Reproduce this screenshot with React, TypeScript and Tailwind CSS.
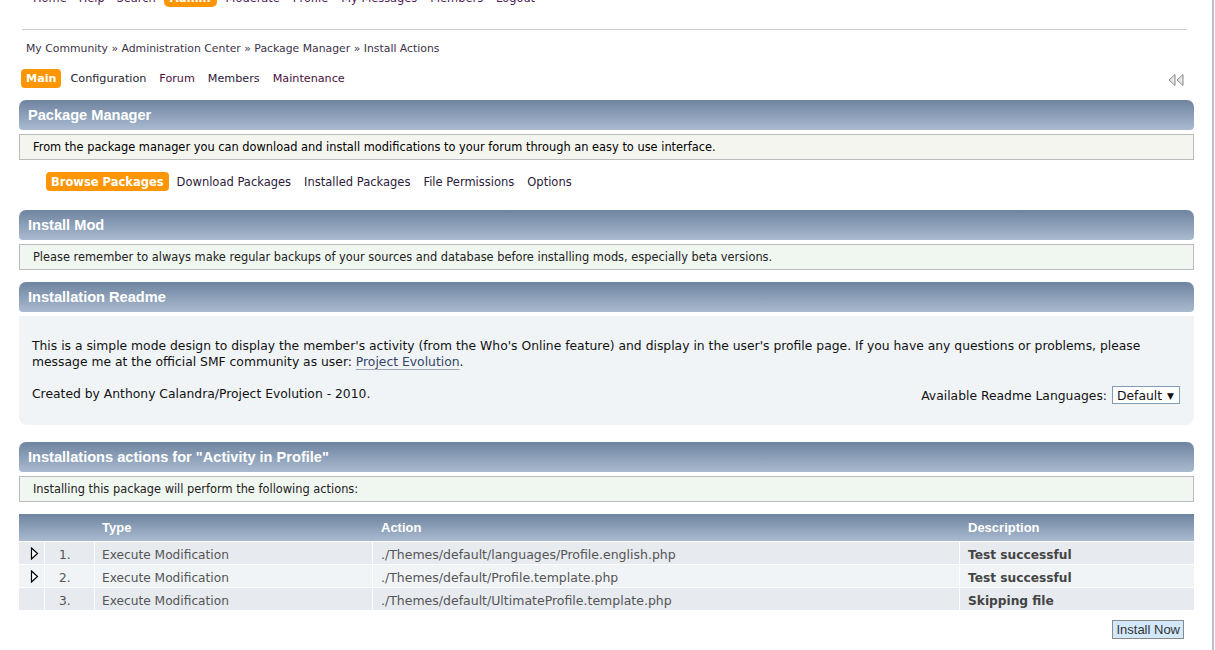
import React from "react";

const body = "[font-family:'DejaVu_Sans',Verdana,sans-serif]";
const head = "[font-family:'Liberation_Sans',Arial,sans-serif]";

function CatHeader({ title }: { title: string }) {
  return (
    <div
      className={`h-[30px] rounded-t-[7px] rounded-b-[4px] bg-gradient-to-b from-[#6f84a0] to-[#aabbd0] flex items-center px-[9px] pt-[1px] text-white font-bold text-[14.6px] ${head}`}
    >
      {title}
    </div>
  );
}

function Arrow() {
  return (
    <svg width="9" height="13" viewBox="0 0 9 13">
      <path d="M1.5 1 L7.5 6.5 L1.5 12 Z" fill="#fff" stroke="#000" strokeWidth="1.2" strokeLinejoin="miter" />
    </svg>
  );
}

function Collapse() {
  return (
    <svg width="16" height="12" viewBox="0 0 16 12">
      <path d="M7 0.5 L1 6 L7 11.5 Z" fill="#e6e6e6" stroke="#8a8a8a" strokeWidth="1" />
      <path d="M15 0.5 L9 6 L15 11.5 Z" fill="#e6e6e6" stroke="#8a8a8a" strokeWidth="1" />
    </svg>
  );
}

const rows = [
  { n: "1.", arrow: true, action: "./Themes/default/languages/Profile.english.php", desc: "Test successful", bg: "bg-[#e7eaef]" },
  { n: "2.", arrow: true, action: "./Themes/default/Profile.template.php", desc: "Test successful", bg: "bg-[#f0f4f7]" },
  { n: "3.", arrow: false, action: "./Themes/default/UltimateProfile.template.php", desc: "Skipping file", bg: "bg-[#e7eaef]" },
];

export default function App() {
  return (
    <div className={`w-[1215px] h-[650px] overflow-hidden bg-white flex ${body}`}>
      <div className="w-[1212px] flex flex-col">
        {/* top nav */}
        <div className="mt-[-12px] h-[19px] flex items-center text-[11.4px] text-[#4b1a55] ml-[33px]">
          <span className="pt-[2px]">Home</span>
          <span className="ml-[12px] pt-[2px]">Help</span>
          <span className="ml-[12px] pt-[2px]">Search</span>
          <span className="ml-[8px] h-[19px] px-[6px] pt-[2px] rounded-[5px] bg-[#fd9604] text-white font-bold flex items-center">Admin</span>
          <span className="ml-[9px] pt-[2px]">Moderate</span>
          <span className="ml-[13px] pt-[2px]">Profile</span>
          <span className="ml-[13px] pt-[2px]">My Messages</span>
          <span className="ml-[13px] pt-[2px]">Members</span>
          <span className="ml-[13px] pt-[2px]">Logout</span>
        </div>
        <div className="mt-[22px] ml-[22px] w-[1165px] h-px bg-[#cccccc]" />

        {/* breadcrumb */}
        <div className="mt-[11px] ml-[26px] h-[16px] pt-[1px] flex items-center text-[10.85px] text-[#3d3347]">
          My Community » Administration Center » Package Manager » Install Actions
        </div>

        {/* admin menu */}
        <div className="mt-[12px] ml-[21px] mr-[28px] h-[19px] flex items-center text-[11.2px] pt-[2px]">
          <span className="h-[19px] px-[5px] mt-[-2px] pt-[2px] rounded-[4px] bg-[#fd9604] text-white font-bold flex items-center">Main</span>
          <span className="ml-[9px] text-[#1f2433]">Configuration</span>
          <span className="ml-[13px] text-[#4b1040]">Forum</span>
          <span className="ml-[13px] text-[#2b1a3a]">Members</span>
          <span className="ml-[13px] text-[#4b1040]">Maintenance</span>
          <span className="ml-auto flex items-center"><Collapse /></span>
        </div>

        <div className="ml-[19px] w-[1175px] flex flex-col">
          {/* Package Manager */}
          <div className="mt-[12px]">
            <CatHeader title="Package Manager" />
          </div>
          <div className="mt-[4px] h-[26px] border border-[#bbbbbb] bg-[#f5f5f0] flex items-center px-[13px] pt-[2px] text-[11.4px] text-black">
            From the package manager you can download and install modifications to your forum through an easy to use interface.
          </div>

          <div className="mt-[12px] ml-[27px] h-[19px] flex items-center text-[11.5px] text-[#2b1a3a]">
            <span className="h-[19px] px-[5px] pt-[2px] rounded-[4px] bg-[#fd9604] text-white font-bold flex items-center">Browse Packages</span>
            <span className="ml-[8px] pt-[2px]">Download Packages</span>
            <span className="ml-[13px] pt-[2px]">Installed Packages</span>
            <span className="ml-[13px] pt-[2px]">File Permissions</span>
            <span className="ml-[13px] pt-[2px]">Options</span>
          </div>

          {/* Install Mod */}
          <div className="mt-[19px]">
            <CatHeader title="Install Mod" />
          </div>
          <div className="mt-[4px] h-[26px] border border-[#bbbbbb] bg-[#f0f6f0] flex items-center px-[13px] pt-[2px] text-[11.4px] text-[#222]">
            Please remember to always make regular backups of your sources and database before installing mods, especially beta versions.
          </div>

          {/* Readme */}
          <div className="mt-[12px]">
            <CatHeader title="Installation Readme" />
          </div>
          <div className="mt-[4px] h-[109px] rounded-b-[8px] bg-[#f0f4f7] pl-[13px] pr-[14px] pt-[22px] text-[12.35px] text-[#111] leading-[16px]">
            <div>
              This is a simple mode design to display the member's activity (from the Who's Online feature) and display in the user's profile page. If you have any questions or problems, please message me at the official SMF community as user:{" "}
              <span className="text-[#334466] underline decoration-[#a0a8b8] underline-offset-[3px]">Project Evolution</span>.
            </div>
            <div className="mt-[14px] flex items-center justify-between">
              <span>Created by Anthony Calandra/Project Evolution - 2010.</span>
              <span className="flex items-center mt-[2px]">
                <span className="mr-[5px] pt-[1px]">Available Readme Languages:</span>
                <span className="w-[68px] h-[18px] border border-[#7f9db9] bg-white flex items-center justify-between pl-[4px] pr-[5px] pt-[1px] text-[12.35px]">
                  <span>Default</span>
                  <span className="text-[9px]">▼</span>
                </span>
              </span>
            </div>
          </div>

          {/* Actions */}
          <div className="mt-[17px]">
            <CatHeader title={'Installations actions for "Activity in Profile"'} />
          </div>
          <div className="mt-[4px] h-[26px] border border-[#bbbbbb] bg-[#f0f6f0] flex items-center px-[13px] pt-[2px] text-[11.4px] text-[#222]">
            Installing this package will perform the following actions:
          </div>

          <div className="mt-[12px] flex flex-col text-[12.2px] text-[#555]">
            <div className={`h-[28px] bg-gradient-to-b from-[#6f84a0] to-[#aabbd0] flex items-center text-white font-bold text-[13px] ${head} border-b border-white`}>
              <div className="w-[76px]" />
              <div className="w-[278px] pl-[7px]">Type</div>
              <div className="w-[587px] pl-[8px]">Action</div>
              <div className="flex-1 pl-[8px]">Description</div>
            </div>
            {rows.map((r) => (
              <div key={r.n} className={`h-[23px] flex border-b border-white ${r.bg}`}>
                <div className="w-[26px] flex items-center pl-[11px] border-r border-white">{r.arrow ? <Arrow /> : null}</div>
                <div className="w-[50px] flex items-center pl-[14px] pt-[4px] border-r border-white">{r.n}</div>
                <div className="w-[278px] flex items-center pl-[7px] pt-[4px] border-r border-white">Execute Modification</div>
                <div className="w-[587px] flex items-center pl-[8px] pt-[4px] border-r border-white text-[12.5px]">{r.action}</div>
                <div className="flex-1 flex items-center pl-[8px] pt-[4px] font-bold text-[#444]">{r.desc}</div>
              </div>
            ))}
          </div>

          <div className="mt-[9px] flex justify-end pr-[10px]">
            <span className={`h-[19px] px-[3px] border border-[#8a8a8a] bg-[#d4e8fb] text-[#333] text-[13px] flex items-center ${head}`}>Install Now</span>
          </div>
        </div>
      </div>
      <div className="w-[2px] h-full bg-[#b9c0ca]" />
      <div className="w-[1px] h-full bg-white" />
    </div>
  );
}
